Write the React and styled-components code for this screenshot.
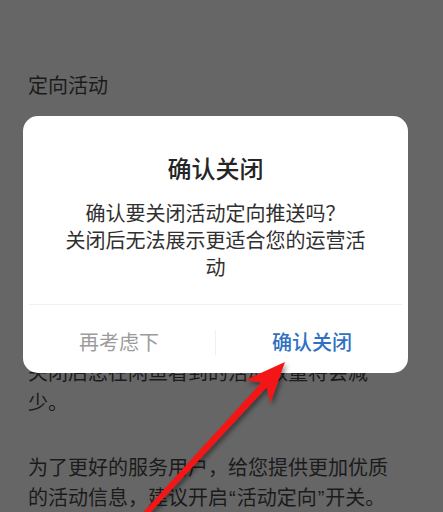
import React from "react";
import styled, { createGlobalStyle } from "styled-components";

const Global = createGlobalStyle`
  html, body { margin: 0; padding: 0; background: #666666; }
  body { font-family: "Noto Sans CJK SC", "Noto Sans", sans-serif; }
  #root { min-height: 512px; }
`;

const Page = styled.div`
  position: relative;
  width: 443px;
  height: 512px;
  overflow: hidden;
  background: #666666;
`;

const Content = styled.div`
  padding: 70px 0 0 28px;
  width: 362px;
  color: #1b1b1b;
  font-size: 20px;
  line-height: 30px;
`;

const Heading = styled.div`
  font-size: 20px;
  line-height: 30px;
  margin-bottom: 42px;
`;

const Para = styled.p`
  margin: 0 0 35px 0;
`;

const Quote = styled.span`
  font-family: "Liberation Sans", "Noto Sans", sans-serif;
  padding: 0 1px;
`;

const Dialog = styled.div`
  position: absolute;
  top: 116px;
  left: 23px;
  width: 385px;
  background: #ffffff;
  border-radius: 15px;
  display: flex;
  flex-direction: column;
`;

const Title = styled.div`
  padding-top: 36px;
  text-align: center;
  font-size: 24px;
  line-height: 32px;
  font-weight: 500;
  color: #252525;
`;

const Message = styled.div`
  margin-top: 15px;
  padding: 0 38px 24px;
  text-align: center;
  font-size: 20px;
  line-height: 27px;
  color: #303030;
`;

const Divider = styled.div`
  height: 1px;
  margin: 0 6px;
  background: #efefef;
`;

const Actions = styled.div`
  display: flex;
  align-items: center;
  padding: 23px 0 17px;
`;

const Action = styled.div`
  flex: 1;
  text-align: center;
  font-size: 20px;
  line-height: 28px;
  font-weight: ${(p) => (p.$primary ? 500 : 400)};
  color: ${(p) => (p.$primary ? "#2f71c2" : "#9b9b9b")};
`;

const VLine = styled.div`
  width: 1px;
  height: 25px;
  background: #f0f0f0;
`;

const Arrow = styled.svg`
  position: absolute;
  left: 0;
  top: 0;
  pointer-events: none;
`;

export default function App() {
  const tip = [285, 362];
  const dir = [0.677, -0.736];
  const perp = [0.736, 0.677];
  const at = (t, w) => [
    (tip[0] - dir[0] * t + perp[0] * w).toFixed(1),
    (tip[1] - dir[1] * t + perp[1] * w).toFixed(1),
  ];
  const pts = [
    tip,
    at(40, 17),
    at(31, 3.6),
    at(215, 2.6),
    at(215, -2.6),
    at(31, -3.6),
    at(40, -17),
  ]
    .map((p) => p.join(","))
    .join(" ");

  return (
    <Page>
      <Global />
      <Content>
        <Heading>定向活动</Heading>
        <Para>
          开启后，我们将根据您的浏览记录和偏好为您推荐更符合您需求的活动信息，帮助您及时了解平台最新优惠。
        </Para>
        <Para>
          关闭后，系统将不再根据您的偏好为
          <br />
          您推送活动信息，您收到的活动推荐
          <br />
          内容将不再个性化，可能与您的需求
          <br />
          关闭后您在闲鱼看到的活动数量将会减
          <br />
          少。
        </Para>
        <Para>
          为了更好的服务用户，给您提供更加优质的活动信息，建议开启<Quote>“</Quote>活动定向<Quote>”</Quote>开关。
        </Para>
      </Content>

      <Dialog>
        <Title>确认关闭</Title>
        <Message>
          确认要关闭活动定向推送吗？
          <br />
          关闭后无法展示更适合您的运营活动
        </Message>
        <Divider />
        <Actions>
          <Action>再考虑下</Action>
          <VLine />
          <Action $primary>确认关闭</Action>
        </Actions>
      </Dialog>

      <Arrow width="443" height="512" viewBox="0 0 443 512">
        <defs>
          <filter id="sh" x="-20%" y="-20%" width="140%" height="140%">
            <feDropShadow dx="2" dy="3" stdDeviation="2.5" floodColor="#000" floodOpacity="0.45" />
          </filter>
        </defs>
        <polygon points={pts} fill="#f41616" filter="url(#sh)" />
      </Arrow>
    </Page>
  );
}
